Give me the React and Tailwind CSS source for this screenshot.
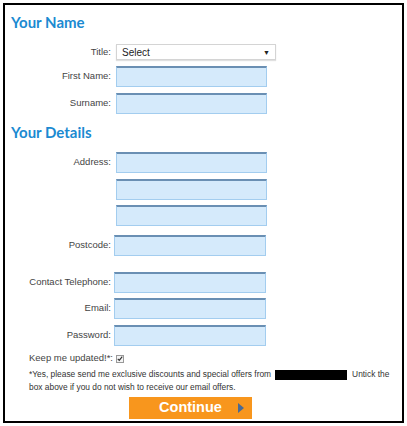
import React from 'react';

const labelCls = "w-[106px] shrink-0 text-right text-[9.5px] text-[#444]";
const inputCls = "h-[21px] bg-[#d5eafb] border border-[#a3cdef] border-t-2 border-t-[#6a8fb3] outline-none";

function Field({ label, mt, ml = 'ml-[5px]', w = 'w-[151px]', h = 'h-[21px]' }) {
  return (
    <div className={`flex items-center ${mt}`}>
      <div className={labelCls}>{label}</div>
      <input className={`${inputCls} ${ml} ${w} ${h}`} />
    </div>
  );
}

export default function App() {
  return (
    <div className="w-[407px] h-[426px] bg-white pt-[3px] pl-[3px]" style={{ fontFamily: '"Liberation Sans", Arial, sans-serif' }}>
      <div className="w-[401px] h-[420px] border-2 border-black pt-[7px]">
        <h2 className="pl-[6px] h-[20px] leading-[20px] text-[15px] font-bold text-[#1b8ad1]" style={{ fontFamily: 'Lato, sans-serif' }}>Your Name</h2>

        <div className="flex items-center mt-[12px]">
          <div className={labelCls}>Title:</div>
          <div className="ml-[5px] w-[160px] h-[16px] bg-white border border-[#d4d4d4] shadow-[0_1px_1px_rgba(0,0,0,0.12)] flex items-center justify-between px-[5px]">
            <span className="text-[10px] text-[#222]">Select</span>
            <span className="text-[7px] text-[#222] leading-none">▼</span>
          </div>
        </div>
        <Field label="First Name:" mt="mt-[6px]" />
        <Field label="Surname:" mt="mt-[6px]" h="h-[20px]" />

        <h2 className="mt-[8px] pl-[6px] h-[20px] leading-[20px] text-[15px] font-bold text-[#1b8ad1]" style={{ fontFamily: 'Lato, sans-serif' }}>Your Details</h2>

        <Field label="Address:" mt="mt-[10px]" />
        <Field label="" mt="mt-[6px]" />
        <Field label="" mt="mt-[5px]" />
        <Field label="Postcode:" mt="mt-[9px]" ml="ml-[3px]" w="w-[152px]" />

        <Field label="Contact Telephone:" mt="mt-[16px]" ml="ml-[3px]" w="w-[152px]" />
        <Field label="Email:" mt="mt-[5px]" ml="ml-[3px]" w="w-[152px]" />
        <Field label="Password:" mt="mt-[6px]" ml="ml-[3px]" w="w-[152px]" />

        <div className="mt-[6px] pl-[24px] flex items-center h-[13px]">
          <span className="text-[9.5px] text-[#444]">Keep me updated!*:</span>
          <span className="ml-[3px] w-[8px] h-[8px] border border-[#999] bg-[#f4f4f4] flex items-center justify-center">
            <svg width="7" height="7" viewBox="0 0 8 8"><path d="M1 4.5 L3 6.5 L7 1.5" fill="none" stroke="#333" strokeWidth="1.6" /></svg>
          </span>
        </div>

        <div className="mt-[3px] pl-[24px] text-[8.4px] leading-[13px] text-[#333]">
          <div className="flex items-center whitespace-nowrap">
            <span>*Yes, please send me exclusive discounts and special offers from</span>
            <span className="inline-block ml-[4px] w-[72px] h-[10px] bg-black"></span>
            <span className="ml-[5px]">Untick the</span>
          </div>
          <div className="whitespace-nowrap">box above if you do not wish to receive our email offers.</div>
        </div>

        <div className="mt-[3px] ml-[124px] w-[123px] h-[22px] bg-[#f8961d] relative flex items-center justify-center">
          <span className="text-[14.5px] font-bold text-white">Continue</span>
          <svg className="absolute right-[8px] top-[6px]" width="6" height="10" viewBox="0 0 6 10"><path d="M0 0 L6 5 L0 10 Z" fill="#4a6a94" /></svg>
        </div>
      </div>
    </div>
  );
}
